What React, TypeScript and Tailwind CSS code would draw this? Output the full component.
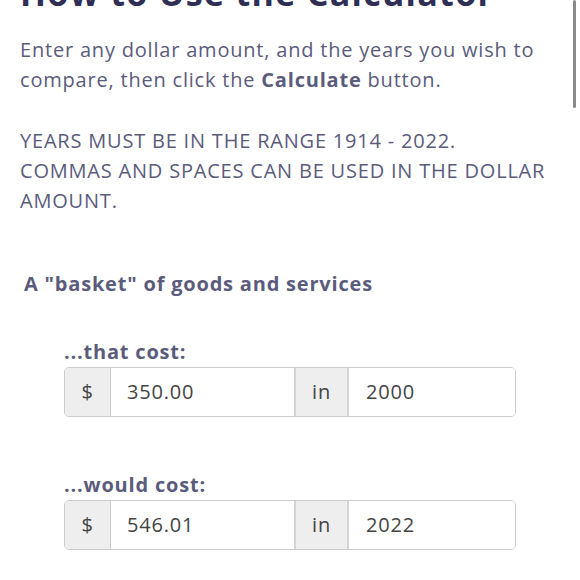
import React from "react";

function CostRow({ label, amount, year }: { label: string; amount: string; year: string }) {
  return (
    <div className="ml-[64px] mr-[64px]">
      <h4 className="text-[20px] leading-[30px] font-bold text-[#5b5b7c] tracking-[0.8px]">{label}</h4>
      <div className="flex h-[50px] rounded-[5px] border border-[#cccccc] overflow-hidden text-[20px] tracking-[0.8px] text-[#444444]">
        <div className="w-[46px] shrink-0 flex items-center justify-center bg-[#eeeeee] border-r border-[#cccccc]">
          $
        </div>
        <div className="flex-1 flex items-center pl-[16px] bg-white">{amount}</div>
        <div className="w-[55px] shrink-0 flex items-center justify-center bg-[#eeeeee] border-x-2 border-[#d4d4d4]">
          in
        </div>
        <div className="w-[166px] shrink-0 flex items-center pl-[17px] bg-white">{year}</div>
      </div>
    </div>
  );
}

export default function App() {
  return (
    <div
      className="relative w-[580px] h-[580px] overflow-hidden bg-white"
      style={{ fontFamily: '"Open Sans", "Noto Sans", sans-serif' }}
    >
      <div className="-mt-[27px] px-[20px]">
        <h2 className="text-[34px] leading-[41px] font-bold text-[#2f2f55] tracking-[1.3px] whitespace-nowrap">
          How to Use the Calculator
        </h2>

        <p className="mt-[21px] text-[20px] leading-[30px] text-[#5b5b7c] tracking-[0.8px]">
          Enter any dollar amount, and the years you wish to compare, then click the{" "}
          <strong className="font-bold">Calculate</strong> button.
        </p>

        <p className="mt-[31px] text-[20px] leading-[30px] text-[#5b5b7c] tracking-[0.8px]">
          YEARS MUST BE IN THE RANGE 1914 - 2022.
          <br />
          COMMAS AND SPACES CAN BE USED IN THE DOLLAR AMOUNT.
        </p>
      </div>

      <h3 className="mt-[53px] ml-[24px] text-[20px] leading-[30px] font-bold text-[#5b5b7c] tracking-[0.8px]">
        A "basket" of goods and services
      </h3>

      <div className="mt-[38px]">
        <CostRow label="...that cost:" amount="350.00" year="2000" />
      </div>
      <div className="mt-[53px]">
        <CostRow label="...would cost:" amount="546.01" year="2022" />
      </div>

      <div className="absolute right-[4px] top-0 w-[3px] h-[108px] rounded-full bg-[#8a8a8a]" />
    </div>
  );
}
